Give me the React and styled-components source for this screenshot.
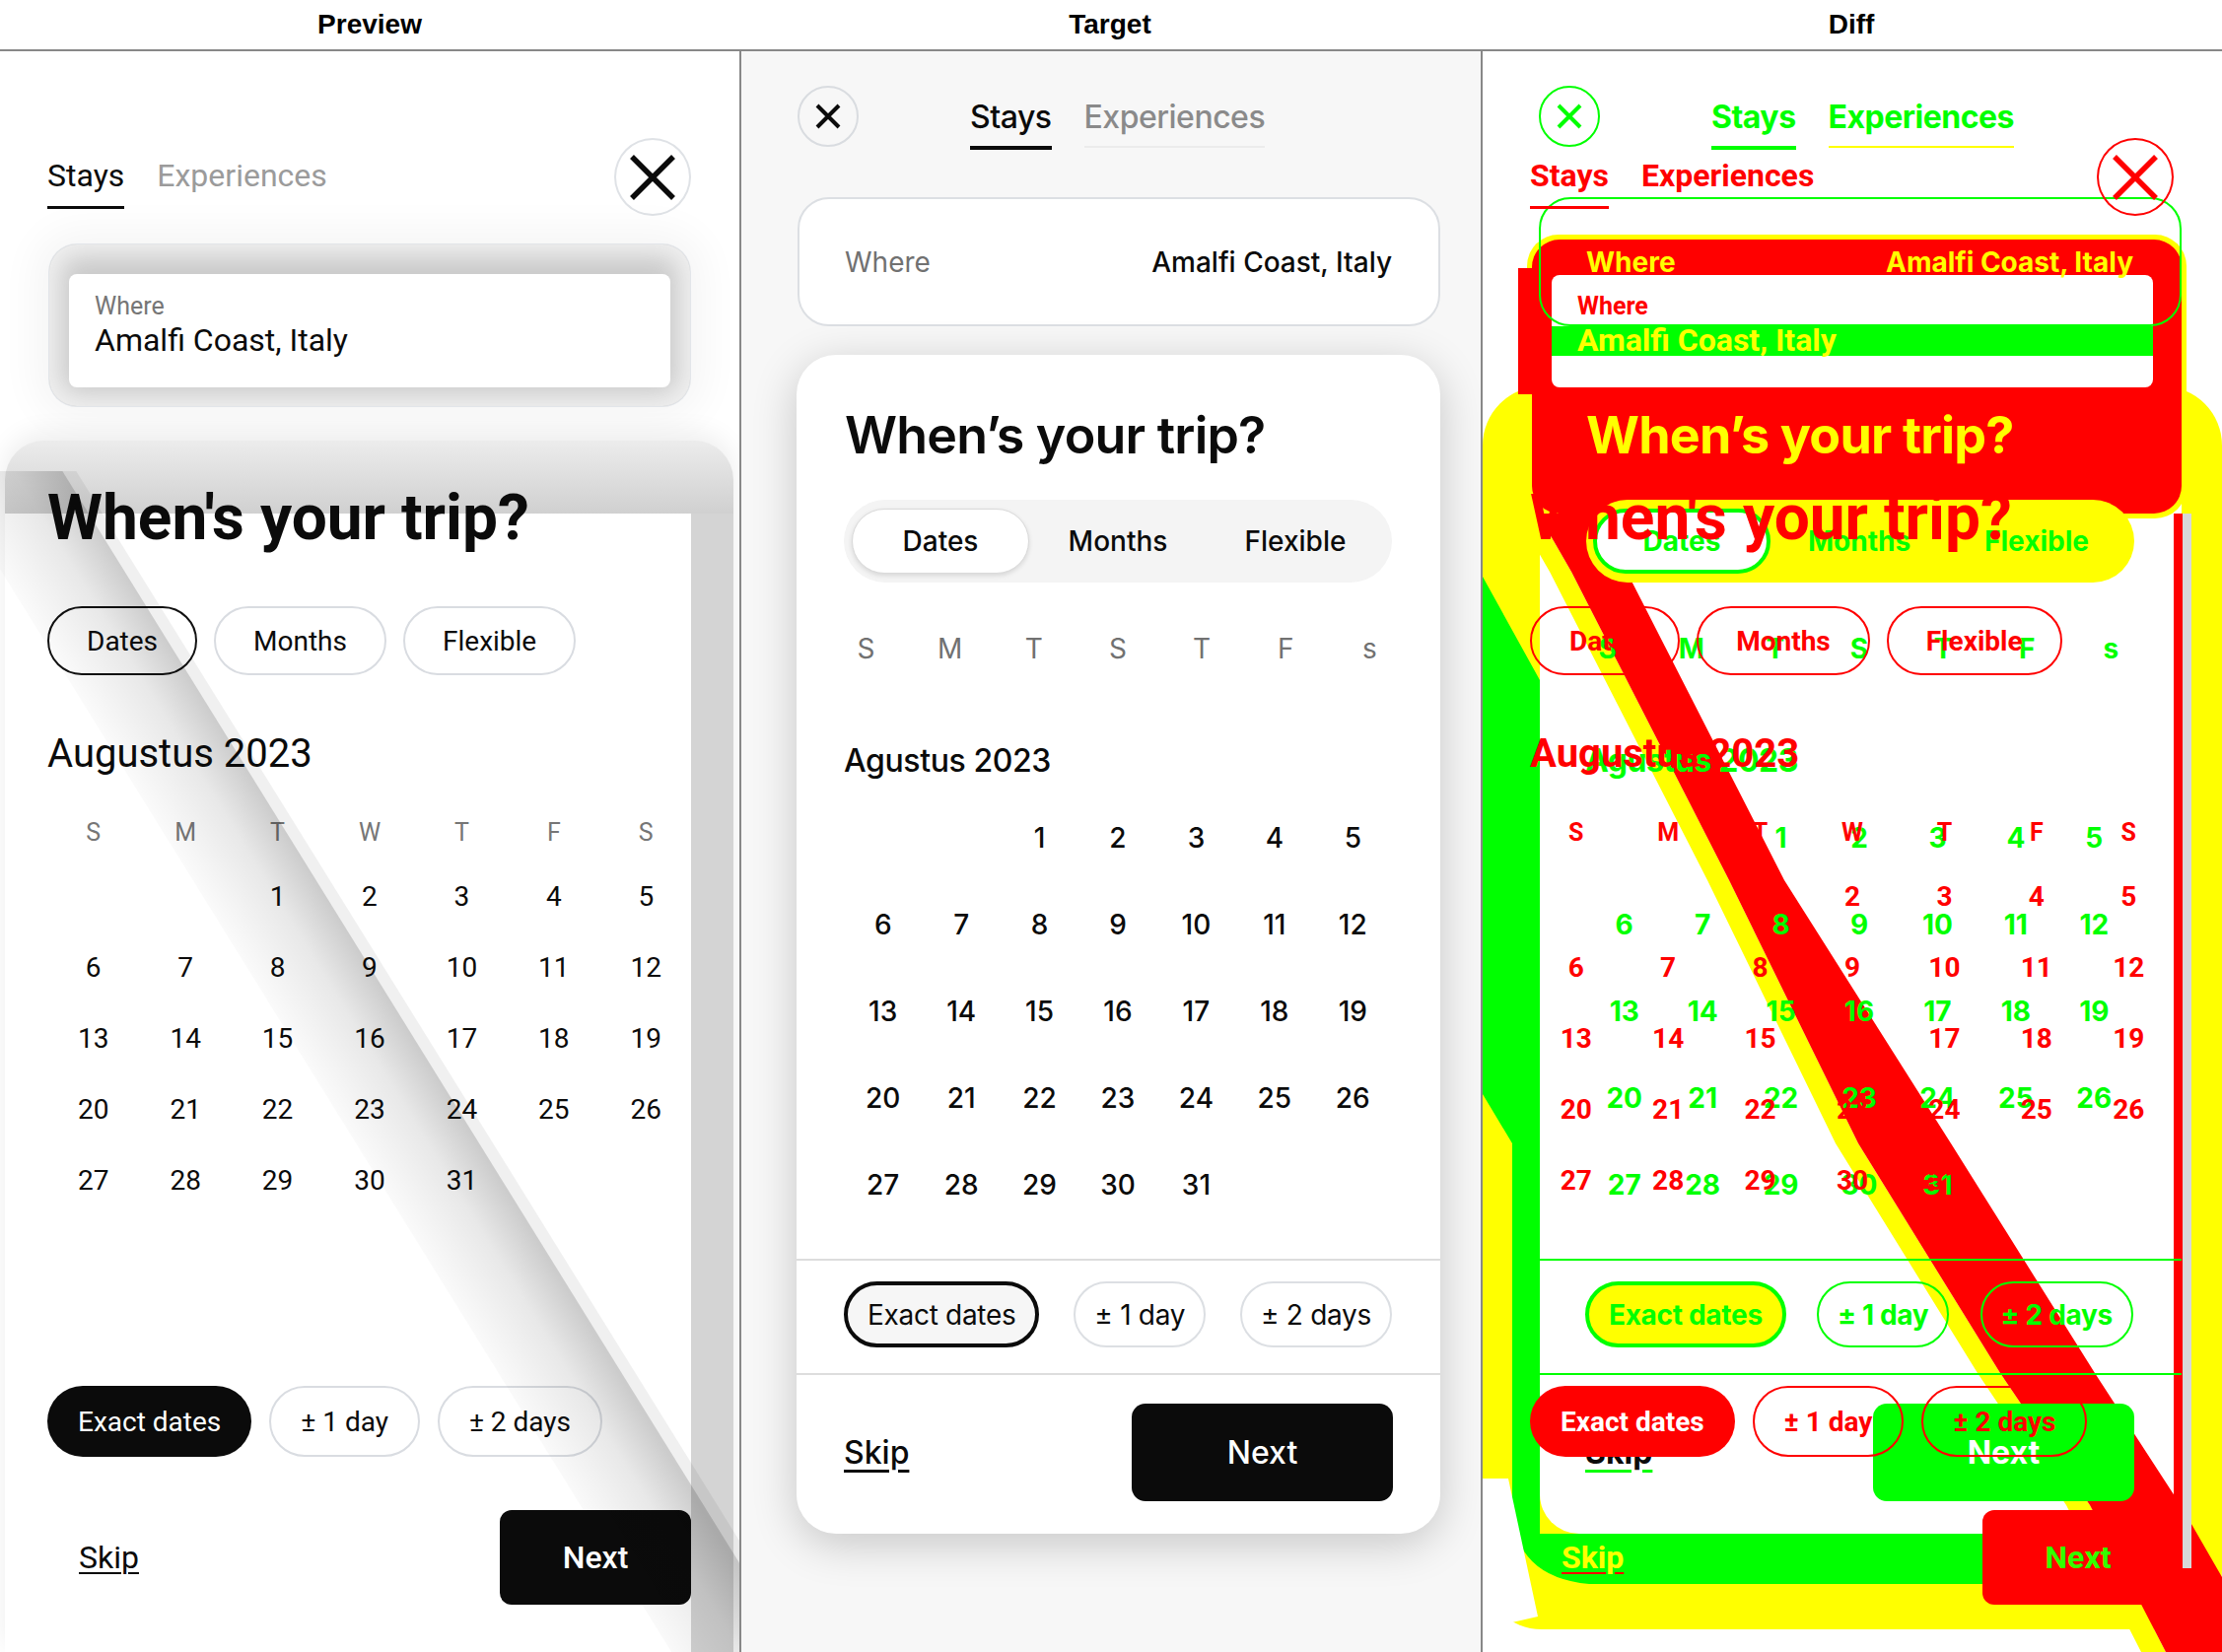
import React from 'react';
import styled, { createGlobalStyle } from 'styled-components';

const GlobalStyle = createGlobalStyle`
  html, body { margin: 0; padding: 0; background: #fff; }
  body { width: 2254px; height: 1676px; overflow: hidden; font-family: 'Liberation Sans', Arial, sans-serif; }
`;

// palettes: normal screens and their diff tints
const P_NORMAL = {
  diff: false, ink: '#0b0b0b', muted: '#767676', tabMuted: '#9b9b9b', underline: '#0b0b0b',
  closeBorder: '#dfe2e6', x: '#0b0b0b', line: '#d9dce1', pillActive: '#111',
  whereLabel: '#767676', whereValue: '#0b0b0b', fill: '#0b0b0b', onFill: '#fff',
  skip: '#0b0b0b', skipLine: '#0b0b0b', nextText: '#fff',
};
const P_DIFF = {
  diff: true, ink: '#ff0000', muted: '#ff0000', tabMuted: '#ff0000', underline: '#ff0000',
  closeBorder: '#ff0000', x: '#ff0000', line: '#ff0000', pillActive: '#ff0000',
  whereLabel: '#ff0000', whereValue: '#ffff00', fill: '#ff0000', onFill: '#fff',
  skip: '#ffff00', skipLine: '#ff0000', nextText: '#33ff00',
};
const T_NORMAL = {
  diff: false, bg: '#f7f7f7', ink: '#0b0b0b', muted: '#717171', tabMuted: '#8a8a8a',
  underline: '#0b0b0b', tabLine: '#ececec', closeBorder: '#d9dce0', x: '#0b0b0b',
  whereBorder: '#dcdfe3', whereBg: '#fff', whereText: '#0b0b0b', whereLabel: '#717171',
  cardBg: '#fff', cardShadow: '0 10px 46px rgba(0,0,0,0.2)', title: '#0b0b0b',
  segBg: '#f4f4f4', segText: '#0b0b0b', pillBg: '#fff', pillBorder: '1px solid #dadada',
  divider: '#dddddd', line: '#dcdfe3', exactBg: '#f6f6f6', exactBorder: '#0b0b0b',
  exactText: '#0b0b0b', skip: '#0b0b0b', fill: '#0b0b0b', onFill: '#fff',
};
const T_DIFF = {
  diff: true, bg: 'transparent', ink: '#00ff00', muted: '#00ff00', tabMuted: '#00ff00',
  underline: '#00ff00', tabLine: '#ffff00', closeBorder: '#00ff00', x: '#00ff00',
  whereBorder: '#00ff00', whereBg: 'transparent', whereText: '#ffff00', whereLabel: '#ffff00',
  cardBg: 'transparent', cardShadow: 'none', title: '#ffff00',
  segBg: 'transparent', segText: '#00ff00', pillBg: '#fff', pillBorder: '4px solid #00ff00',
  divider: '#00ff00', line: '#00ff00', exactBg: '#ffff00', exactBorder: '#00ff00',
  exactText: '#00ff00', skip: '#0b0b0b', fill: '#00ff00', onFill: '#fff',
};

const w = (n) => (p) => (p.$c.diff ? 700 : n);

const PREVIEW_WEEK = ['S', 'M', 'T', 'W', 'T', 'F', 'S'];
const TARGET_WEEK = ['S', 'M', 'T', 'S', 'T', 'F', 's'];
const DAYS = [null, null, ...Array.from({ length: 31 }, (_, i) => i + 1)];

const Page = styled.div`
  width: 2254px;
  height: 1676px;
  display: grid;
  grid-template-columns: 750px 752px 752px;
  grid-template-rows: 52px 1624px;
`;

const HeaderCell = styled.div`
  box-sizing: border-box;
  height: 52px;
  border-bottom: 2px solid #888;
  text-align: center;
  font: 700 28px/50px 'Liberation Sans', Arial, sans-serif;
  color: #000;
`;

const Column = styled.div`
  position: relative;
  box-sizing: border-box;
  height: 1624px;
  overflow: hidden;
  border-left: ${(p) => (p.$border ? '2px solid #888' : 'none')};
  background: #fff;
`;

const XIcon = ({ size, stroke, color }) => (
  <svg width={size} height={size} viewBox={`0 0 ${size} ${size}`}>
    <path
      d={`M2 2 L${size - 2} ${size - 2} M${size - 2} 2 L2 ${size - 2}`}
      stroke={color}
      strokeWidth={stroke}
      fill="none"
    />
  </svg>
);

/* ---------- Preview screen ---------- */

const PScreen = styled.div`
  position: relative;
  display: flex;
  flex-direction: column;
  width: 750px;
  height: 1624px;
  font-family: Roboto, 'Liberation Sans', sans-serif;
  color: ${(p) => p.$c.ink};
  font-weight: ${w(400)};
  overflow: hidden;
`;

const PTopRow = styled.div`
  display: flex;
  justify-content: space-between;
  align-items: flex-start;
  margin-top: 88px;
  padding: 0 49px 0 48px;
`;

const PTabs = styled.div`
  display: flex;
  gap: 33px;
  margin-top: 19px;
`;

const PTab = styled.div`
  font-size: 32px;
  line-height: 38px;
  color: ${(p) => (p.$active ? p.$c.ink : p.$c.tabMuted)};
  &::after {
    content: '';
    display: block;
    height: 3px;
    margin-top: 12px;
    background: ${(p) => (p.$active ? p.$c.underline : 'transparent')};
  }
`;

const PClose = styled.div`
  width: 78px;
  height: 79px;
  box-sizing: border-box;
  border-radius: 50%;
  border: 2px solid ${(p) => p.$c.closeBorder};
  display: flex;
  align-items: center;
  justify-content: center;
`;

const PWhereOuter = styled.div`
  margin: 29px 50px 0;
  height: 164px;
  box-sizing: border-box;
  border-radius: 28px;
  padding: 30px 20px 0;
  background: ${(p) => (p.$c.diff ? 'transparent' : '#c9c9c9')};
  box-shadow: ${(p) =>
    p.$c.diff
      ? 'none'
      : 'inset 0 0 26px 12px #f1f1f1, 0 0 0 1px #e2e5e9, 0 0 40px 14px rgba(0,0,0,0.045)'};
`;

const PWhereInner = styled.div`
  height: 115px;
  box-sizing: border-box;
  border-radius: 8px;
  padding: 18px 26px 0;
  background: ${(p) => (p.$c.diff ? 'transparent' : '#fff')};
`;

const PWhereLabel = styled.div`
  font-size: 25px;
  line-height: 30px;
  color: ${(p) => p.$c.whereLabel};
`;

const PWhereValue = styled.div`
  font-size: 32px;
  line-height: 38px;
  color: ${(p) => p.$c.whereValue};
`;

const PCard = styled.div`
  flex: 1;
  margin: 35px 6px 0 5px;
  border-radius: 40px 40px 0 0;
  padding: 41px 43px 0;
  background: ${(p) =>
    p.$c.diff
      ? 'transparent'
      : 'linear-gradient(#ececec, #d0d0d0) top / 100% 74px no-repeat, linear-gradient(#d4d4d4, #d4d4d4) right 0 top 74px / 43px 100% no-repeat, #fff'};
  box-shadow: ${(p) => (p.$c.diff ? 'none' : '0 -8px 26px rgba(0,0,0,0.07)')};
`;

const PTitle = styled.h1`
  margin: 0;
  font-size: 64px;
  line-height: 76px;
  font-weight: 700;
  color: ${(p) => p.$c.ink};
`;

const PPills = styled.div`
  display: flex;
  gap: 17px;
  margin-top: 51px;
`;

const PPill = styled.div`
  height: 70px;
  box-sizing: border-box;
  padding: 0 38px;
  border-radius: 35px;
  border: 2px solid ${(p) => (p.$active ? p.$c.pillActive : p.$c.line)};
  display: flex;
  align-items: center;
  font-size: 28px;
  color: ${(p) => p.$c.ink};
`;

const PMonth = styled.div`
  margin-top: 56px;
  font-size: 40px;
  line-height: 48px;
`;

const PWeek = styled.div`
  display: grid;
  grid-template-columns: repeat(7, 1fr);
  width: 654px;
  margin-top: 41px;
  font-size: 25px;
  line-height: 30px;
  text-align: center;
  color: ${(p) => p.$c.muted};
`;

const PDays = styled.div`
  display: grid;
  grid-template-columns: repeat(7, 1fr);
  grid-auto-rows: 72px;
  width: 654px;
  margin-top: 14px;
  font-size: 28px;
  line-height: 72px;
  text-align: center;
`;

const PFlexRow = styled.div`
  display: flex;
  gap: 18px;
  margin-top: 172px;
`;

const PFlexPill = styled.div`
  height: 72px;
  box-sizing: border-box;
  padding: 0 ${(p) => (p.$active ? 31 : 30)}px;
  border-radius: 36px;
  border: ${(p) => (p.$active ? 'none' : `2px solid ${p.$c.line}`)};
  background: ${(p) => (p.$active ? p.$c.fill : 'transparent')};
  color: ${(p) => (p.$active ? p.$c.onFill : p.$c.ink)};
  display: flex;
  align-items: center;
  font-size: 28px;
`;

const PFooter = styled.div`
  display: flex;
  justify-content: space-between;
  align-items: center;
  margin-top: 54px;
  padding-left: 32px;
`;

const PSkip = styled.span`
  font-size: 32px;
  color: ${(p) => p.$c.skip};
  text-decoration: underline;
  text-decoration-color: ${(p) => p.$c.skipLine};
  text-decoration-thickness: 2px;
  text-underline-offset: 4px;
`;

const PNext = styled.div`
  width: 194px;
  height: 96px;
  border-radius: 12px;
  background: ${(p) => p.$c.fill};
  color: ${(p) => p.$c.nextText};
  display: flex;
  align-items: center;
  justify-content: center;
  font-size: 32px;
  font-weight: ${w(500)};
`;

const FoldLayer = styled.svg`
  position: absolute;
  left: 0;
  top: 0;
  z-index: 2;
  pointer-events: none;
`;

// page-curl shadow that runs diagonally over the preview card
const Fold = () => {
  const x = (y) => 170 + (y - 650) * 0.62;
  const y0 = 478;
  const y1 = 1676;
  return (
    <FoldLayer width="750" height="1624" viewBox="0 52 750 1624">
      <defs>
        <linearGradient id="foldShade" gradientUnits="userSpaceOnUse" x1="66" y1="714" x2="170" y2="650">
          <stop offset="0" stopColor="#000" stopOpacity="0" />
          <stop offset="0.65" stopColor="#000" stopOpacity="0.09" />
          <stop offset="1" stopColor="#000" stopOpacity="0.2" />
        </linearGradient>
      </defs>
      <polygon
        points={`${x(y0) - 125},${y0} ${x(y0)},${y0} ${x(y1)},${y1} ${x(y1) - 125},${y1}`}
        fill="url(#foldShade)"
      />
      <polygon
        points={`${x(y0)},${y0} ${x(y0) + 14},${y0} ${x(y1) + 14},${y1} ${x(y1)},${y1}`}
        fill="#000"
        fillOpacity="0.06"
      />
    </FoldLayer>
  );
};

const PreviewScreen = ({ c }) => (
  <PScreen $c={c}>
    <PTopRow>
      <PTabs>
        <PTab $c={c} $active>Stays</PTab>
        <PTab $c={c}>Experiences</PTab>
      </PTabs>
      <PClose $c={c}>
        <XIcon size={46} stroke={5.5} color={c.x} />
      </PClose>
    </PTopRow>
    <PWhereOuter $c={c}>
      <PWhereInner $c={c}>
        <PWhereLabel $c={c}>Where</PWhereLabel>
        <PWhereValue $c={c}>Amalfi Coast, Italy</PWhereValue>
      </PWhereInner>
    </PWhereOuter>
    <PCard $c={c}>
      <PTitle $c={c}>When's your trip?</PTitle>
      <PPills>
        <PPill $c={c} $active>Dates</PPill>
        <PPill $c={c}>Months</PPill>
        <PPill $c={c}>Flexible</PPill>
      </PPills>
      <PMonth>Augustus 2023</PMonth>
      <PWeek $c={c}>
        {PREVIEW_WEEK.map((d, i) => (
          <span key={i}>{d}</span>
        ))}
      </PWeek>
      <PDays>
        {DAYS.map((d, i) => (
          <span key={i}>{d}</span>
        ))}
      </PDays>
      <PFlexRow>
        <PFlexPill $c={c} $active>Exact dates</PFlexPill>
        <PFlexPill $c={c}>± 1 day</PFlexPill>
        <PFlexPill $c={c}>± 2 days</PFlexPill>
      </PFlexRow>
      <PFooter>
        <PSkip $c={c}>Skip</PSkip>
        <PNext $c={c}>Next</PNext>
      </PFooter>
    </PCard>
    {!c.diff && <Fold />}
  </PScreen>
);

/* ---------- Target screen ---------- */

const TScreen = styled.div`
  display: flex;
  flex-direction: column;
  width: 750px;
  height: 1624px;
  box-sizing: border-box;
  padding: 0 41px 0 56px;
  background: ${(p) => p.$c.bg};
  font-family: Inter, 'Noto Sans', sans-serif;
  color: ${(p) => p.$c.ink};
  font-weight: ${w(400)};
`;

const TTopRow = styled.div`
  display: flex;
  align-items: flex-start;
  margin-top: 35px;
  padding-left: 1px;
`;

const TClose = styled.div`
  width: 62px;
  height: 62px;
  box-sizing: border-box;
  border-radius: 50%;
  border: 2px solid ${(p) => p.$c.closeBorder};
  display: flex;
  align-items: center;
  justify-content: center;
`;

const TTabs = styled.div`
  display: flex;
  gap: 33px;
  margin: 12px 0 0 113px;
`;

const TTab = styled.div`
  font-size: 32px;
  line-height: 40px;
  font-weight: ${w(500)};
  letter-spacing: -0.5px;
  color: ${(p) => (p.$active ? p.$c.ink : p.$c.tabMuted)};
  &::after {
    content: '';
    display: block;
    height: ${(p) => (p.$active ? 4 : 2)}px;
    margin-top: 9px;
    background: ${(p) => (p.$active ? p.$c.underline : p.$c.tabLine)};
  }
`;

const TWhere = styled.div`
  margin: 48px 0 0 1px;
  height: 131px;
  box-sizing: border-box;
  border: 2px solid ${(p) => p.$c.whereBorder};
  border-radius: 32px;
  background: ${(p) => p.$c.whereBg};
  padding: 0 47px 0 46px;
  display: flex;
  justify-content: space-between;
  align-items: center;
  font-size: 28px;
`;

const TWhereLabel = styled.span`
  color: ${(p) => p.$c.whereLabel};
`;

const TWhereValue = styled.span`
  color: ${(p) => p.$c.whereText};
  font-weight: ${w(500)};
`;

const TCard = styled.div`
  margin-top: 29px;
  height: 1196px;
  box-sizing: border-box;
  border-radius: 40px;
  background: ${(p) => p.$c.cardBg};
  box-shadow: ${(p) => p.$c.cardShadow};
  display: flex;
  flex-direction: column;
`;

const TCardMain = styled.div`
  padding: 51px 49px 31px 48px;
  border-bottom: 2px solid ${(p) => p.$c.divider};
`;

const TTitle = styled.h1`
  margin: 0 0 0 1px;
  font-size: 52px;
  line-height: 62px;
  font-weight: ${w(600)};
  letter-spacing: -0.8px;
  color: ${(p) => p.$c.title};
`;

const TSegment = styled.div`
  margin-top: 34px;
  height: 84px;
  box-sizing: border-box;
  padding: 9px 8px;
  border-radius: 42px;
  background: ${(p) => p.$c.segBg};
  display: grid;
  grid-template-columns: repeat(3, 1fr);
`;

const TSegItem = styled.div`
  display: flex;
  align-items: center;
  justify-content: center;
  border-radius: 33px;
  font-size: 28px;
  font-weight: ${w(500)};
  color: ${(p) => p.$c.segText};
  background: ${(p) => (p.$active ? p.$c.pillBg : 'transparent')};
  border: ${(p) => (p.$active ? p.$c.pillBorder : 'none')};
  box-shadow: ${(p) => (p.$active && !p.$c.diff ? '0 2px 5px rgba(0,0,0,0.12)' : 'none')};
`;

const TWeek = styled.div`
  display: grid;
  grid-template-columns: repeat(7, 1fr);
  margin: 50px -20px 0;
  font-size: 28px;
  line-height: 34px;
  text-align: center;
  color: ${(p) => p.$c.muted};
`;

const TMonth = styled.div`
  margin-top: 78px;
  font-size: 32px;
  line-height: 38px;
  font-weight: ${w(500)};
  letter-spacing: -0.4px;
`;

const TDays = styled.div`
  display: grid;
  grid-template-columns: repeat(7, 1fr);
  grid-auto-rows: 88px;
  margin-top: 15px;
  font-size: 28px;
  line-height: 88px;
  font-weight: ${w(500)};
  text-align: center;
`;

const TFlexRow = styled.div`
  display: flex;
  justify-content: space-between;
  padding: 21px 49px 26px 48px;
  border-bottom: 2px solid ${(p) => p.$c.divider};
`;

const TFlexPill = styled.div`
  height: 67px;
  box-sizing: border-box;
  padding: 0 ${(p) => (p.$active ? 20 : 19)}px;
  border-radius: 34px;
  border: ${(p) => (p.$active ? `4px solid ${p.$c.exactBorder}` : `2px solid ${p.$c.line}`)};
  background: ${(p) => (p.$active ? p.$c.exactBg : 'transparent')};
  color: ${(p) => (p.$active ? p.$c.exactText : p.$c.ink)};
  display: flex;
  align-items: center;
  font-size: 28px;
  letter-spacing: -0.3px;
`;

const TFooter = styled.div`
  display: flex;
  justify-content: space-between;
  align-items: center;
  padding: 29px 48px 0;
`;

const TSkip = styled.span`
  font-size: 32px;
  font-weight: ${w(500)};
  color: ${(p) => p.$c.skip};
  text-decoration: underline;
  text-decoration-color: ${(p) => p.$c.underline};
  text-decoration-thickness: 3px;
  text-underline-offset: 6px;
`;

const TNext = styled.div`
  width: 265px;
  height: 99px;
  border-radius: 14px;
  background: ${(p) => p.$c.fill};
  color: ${(p) => p.$c.onFill};
  display: flex;
  align-items: center;
  justify-content: center;
  font-size: 32px;
  font-weight: ${w(500)};
`;

const TargetScreen = ({ c }) => (
  <TScreen $c={c}>
    <TTopRow>
      <TClose $c={c}>
        <XIcon size={26} stroke={4} color={c.x} />
      </TClose>
      <TTabs>
        <TTab $c={c} $active>Stays</TTab>
        <TTab $c={c}>Experiences</TTab>
      </TTabs>
    </TTopRow>
    <TWhere $c={c}>
      <TWhereLabel $c={c}>Where</TWhereLabel>
      <TWhereValue $c={c}>Amalfi Coast, Italy</TWhereValue>
    </TWhere>
    <TCard $c={c}>
      <TCardMain $c={c}>
        <TTitle $c={c}>When’s your trip?</TTitle>
        <TSegment $c={c}>
          <TSegItem $c={c} $active>Dates</TSegItem>
          <TSegItem $c={c}>Months</TSegItem>
          <TSegItem $c={c}>Flexible</TSegItem>
        </TSegment>
        <TWeek $c={c}>
          {TARGET_WEEK.map((d, i) => (
            <span key={i}>{d}</span>
          ))}
        </TWeek>
        <TMonth $c={c}>Agustus 2023</TMonth>
        <TDays $c={c}>
          {DAYS.map((d, i) => (
            <span key={i}>{d}</span>
          ))}
        </TDays>
      </TCardMain>
      <TFlexRow $c={c}>
        <TFlexPill $c={c} $active>Exact dates</TFlexPill>
        <TFlexPill $c={c}>± 1 day</TFlexPill>
        <TFlexPill $c={c}>± 2 days</TFlexPill>
      </TFlexRow>
      <TFooter>
        <TSkip $c={c}>Skip</TSkip>
        <TNext $c={c}>Next</TNext>
      </TFooter>
    </TCard>
  </TScreen>
);

/* ---------- Diff ---------- */

const DiffStack = styled.div`
  display: grid;
  width: 750px;
  height: 1624px;
  & > * {
    grid-area: 1 / 1;
  }
`;

const DiffArt = () => (
  <svg width="750" height="1624" viewBox="1504 52 750 1624">
    <rect x="1504" y="52" width="750" height="1624" fill="#fff" />
    <rect x="1504" y="392" width="750" height="1261" rx="60" fill="#ffff00" />
    <path
      d="M1504 585 L1562 690 L1562 1556 L2012 1556 L2012 1607 L1612 1607 Q1536 1600 1534 1530 L1534 1160 L1504 1110 Z"
      fill="#00ff00"
    />
    <path d="M1504 1500 L1530 1500 L1560 1640 L1504 1653 Z" fill="#fff" />
    <rect x="1562" y="360" width="651" height="1196" rx="40" fill="#fff" />
    <rect x="1549" y="238" width="669" height="288" rx="32" fill="#ffff00" />
    <rect x="1554" y="243" width="659" height="278" rx="28" fill="#ff0000" />
    <rect x="1540" y="272" width="20" height="128" fill="#ff0000" />
    <rect x="1574" y="279" width="610" height="114" rx="8" fill="#fff" />
    <rect x="1574" y="331" width="610" height="30" fill="#00ff00" />
    <path
      d="M1538 521 L1560 521 L1594 580 L1754 893 L1885 1160 L2029 1393 L2120 1527 L2197 1676 L2172 1676 L2096 1527 L2006 1393 L1862 1160 L1732 893 L1572 580 Z"
      fill="#ffff00"
    />
    <path
      d="M1560 521 L1625 521 L1640 560 L1810 893 L1979 1160 L2125 1393 L2212 1527 L2254 1600 L2254 1676 L2197 1676 L2120 1527 L2029 1393 L1885 1160 L1754 893 L1594 580 Z"
      fill="#ff0000"
    />
    <rect x="1609" y="507" width="556" height="84" rx="42" fill="#ffff00" />
    <rect x="2205" y="521" width="9" height="1030" fill="#ff0000" />
    <rect x="2214" y="521" width="9" height="1070" fill="#d8d8d8" />
  </svg>
);

export default function App() {
  return (
    <>
      <GlobalStyle />
      <Page>
        <HeaderCell>Preview</HeaderCell>
        <HeaderCell>Target</HeaderCell>
        <HeaderCell>Diff</HeaderCell>
        <Column>
          <PreviewScreen c={P_NORMAL} />
        </Column>
        <Column $border>
          <TargetScreen c={T_NORMAL} />
        </Column>
        <Column $border>
          <DiffStack>
            <DiffArt />
            <PreviewScreen c={P_DIFF} />
            <TargetScreen c={T_DIFF} />
          </DiffStack>
        </Column>
      </Page>
    </>
  );
}
